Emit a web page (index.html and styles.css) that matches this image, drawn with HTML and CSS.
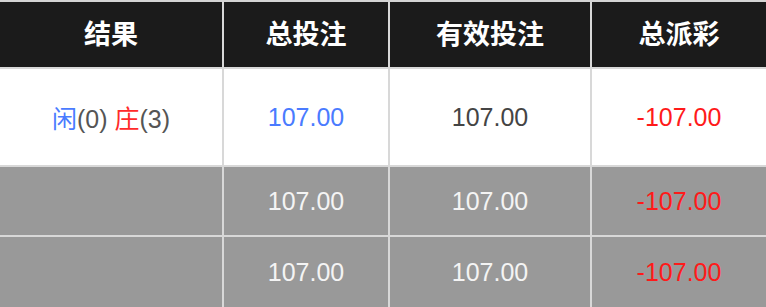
FILE: index.html
```html
<!DOCTYPE html>
<html lang="zh">
<head>
<meta charset="utf-8">
<title>投注结果</title>
<link rel="stylesheet" href="styles.css">
</head>
<body>
<table class="report">
  <colgroup>
    <col class="c1"><col class="c2"><col class="c3"><col class="c4">
  </colgroup>
  <thead>
    <tr class="head">
      <th>结果</th>
      <th>总投注</th>
      <th>有效投注</th>
      <th>总派彩</th>
    </tr>
  </thead>
  <tbody>
    <tr class="main">
      <td><span class="player">闲</span>(0) <span class="banker">庄</span>(3)</td>
      <td class="blue">107.00</td>
      <td>107.00</td>
      <td class="red">-107.00</td>
    </tr>
    <tr class="sub first">
      <td></td>
      <td>107.00</td>
      <td>107.00</td>
      <td class="red">-107.00</td>
    </tr>
    <tr class="sub last">
      <td></td>
      <td>107.00</td>
      <td>107.00</td>
      <td class="red">-107.00</td>
    </tr>
  </tbody>
</table>
</body>
</html>
```
FILE: styles.css
```css
html, body {
  margin: 0;
  padding: 0;
  background: #999999;
}
.report {
  width: 766px;
  table-layout: fixed;
  border-collapse: separate;
  border-spacing: 0;
  border-top: 2px solid #d4d4d4;
  font-family: "Liberation Sans", Arial, "Noto Sans CJK SC", sans-serif;
}
.c1 { width: 224px; }
.c2 { width: 166px; }
.c3 { width: 202px; }
.c4 { width: 174px; }
.report th,
.report td {
  padding: 0;
  text-align: center;
  vertical-align: middle;
  border-right: 2px solid #d8d8d8;
  border-bottom: 2px solid #d8d8d8;
}
.report th:last-child,
.report td:last-child {
  border-right: 0;
}
.head th {
  height: 61px;
  padding-bottom: 4px;
  background: #1b1b1b;
  color: #ffffff;
  font-family: "Noto Sans CJK SC", sans-serif;
  font-weight: 700;
  font-size: 27px;
  line-height: 1;
}
.main td {
  height: 96px;
  background: #ffffff;
  color: #444444;
  font-size: 25px;
}
.sub td {
  height: 68px;
  background: #999999;
  color: #f4f4f4;
  font-size: 25px;
}
.sub.last td {
  height: 70px;
  border-bottom: 0;
}
.player, .blue { color: #4a7bff; }
.banker { color: #ff2a2a; }
.main .player, .main .banker {
  font-family: "Noto Sans CJK SC", sans-serif;
}
.report .red { color: #ff1a1a; }
.main td:first-child { color: #555555; }
.main .blue { color: #4a7bff; }
```
